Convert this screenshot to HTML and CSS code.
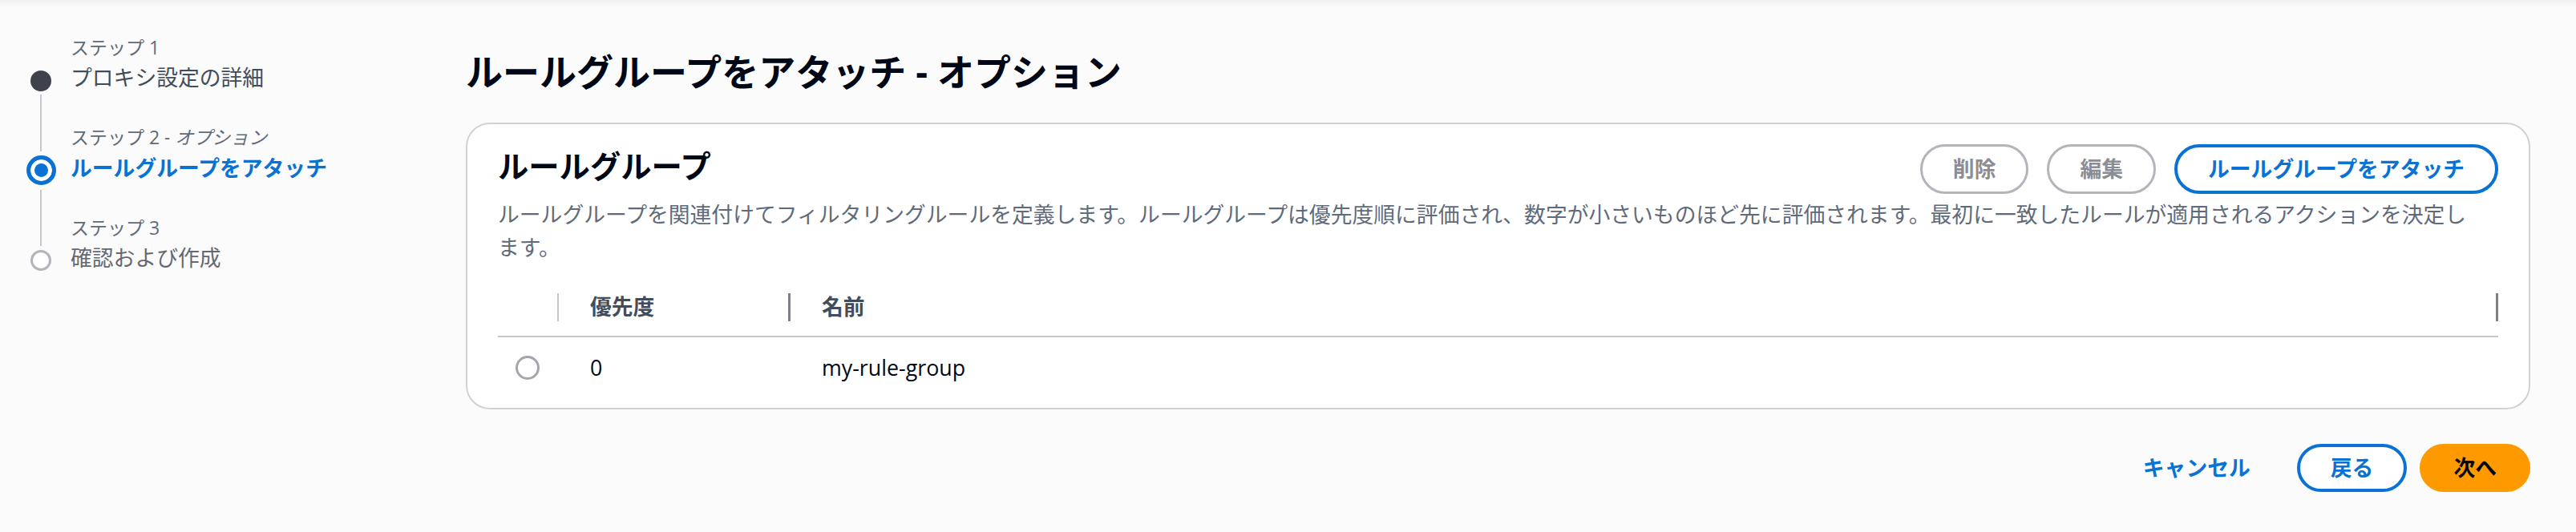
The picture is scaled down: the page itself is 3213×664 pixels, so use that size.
FILE: index.html
```html
<!DOCTYPE html>
<html lang="ja">
<head>
<meta charset="utf-8">
<title>ルールグループをアタッチ - オプション</title>
<link rel="stylesheet" href="styles.css">
</head>
<body>
<div class="layout">
  <nav class="wizard-nav">
    <ul class="steps">
      <li class="step visited">
        <div class="rail"><span class="seg-top"></span><span class="dot"></span><span class="seg-bottom"></span></div>
        <div class="step-text">
          <div class="step-num">ステップ 1</div>
          <div class="step-title">プロキシ設定の詳細</div>
        </div>
      </li>
      <li class="step current">
        <div class="rail"><span class="seg-top"></span><span class="dot"></span><span class="seg-bottom"></span></div>
        <div class="step-text">
          <div class="step-num">ステップ 2<i> - オプション</i></div>
          <div class="step-title">ルールグループをアタッチ</div>
        </div>
      </li>
      <li class="step upcoming">
        <div class="rail"><span class="seg-top"></span><span class="dot"></span></div>
        <div class="step-text">
          <div class="step-num">ステップ 3</div>
          <div class="step-title">確認および作成</div>
        </div>
      </li>
    </ul>
  </nav>

  <main class="main">
    <h1 class="page-title">ルールグループをアタッチ - オプション</h1>

    <section class="container">
      <div class="c-header">
        <h2 class="c-title">ルールグループ</h2>
        <div class="actions">
          <button class="btn btn-disabled" type="button">削除</button>
          <button class="btn btn-disabled" type="button">編集</button>
          <button class="btn btn-normal" type="button">ルールグループをアタッチ</button>
        </div>
      </div>
      <p class="desc">ルールグループを関連付けてフィルタリングルールを定義します。ルールグループは優先度順に評価され、数字が小さいものほど先に評価されます。最初に一致したルールが適用されるアクションを決定します。</p>

      <div class="table">
        <div class="t-head">
          <div class="th th-sel"></div><span class="divider light"></span>
          <div class="th th-pri">優先度</div><span class="divider"></span>
          <div class="th th-name">名前</div><span class="divider"></span>
        </div>
        <div class="tr">
          <div class="td td-sel"><span class="radio"></span></div>
          <div class="td td-pri">0</div>
          <div class="td td-name">my-rule-group</div>
        </div>
      </div>
    </section>

    <div class="footer">
      <button class="btn btn-link" type="button">キャンセル</button>
      <button class="btn btn-normal btn-foot" type="button">戻る</button>
      <button class="btn btn-primary btn-foot" type="button">次へ</button>
    </div>
  </main>
</div>
</body>
</html>
```
FILE: styles.css
```css
* { box-sizing: border-box; }

html, body { margin: 0; padding: 0; }

body {
  width: 3213px;
  height: 664px;
  overflow: hidden;
  background: #fbfbfb linear-gradient(#f1f1f2, #fbfbfb 10px) no-repeat;
  font-family: "Open Sans", "Noto Sans CJK JP", sans-serif;
  font-size: 26.8px;
  line-height: 40px;
  color: #000716;
}

.layout { display: flex; }

/* ---------- wizard navigation ---------- */
.wizard-nav {
  width: 581px;
  flex: none;
  padding-top: 44px;
  padding-left: 14px;
}

.steps { list-style: none; margin: 0; padding: 0; }

.step { display: flex; }

.rail {
  width: 74px;
  flex: none;
  display: flex;
  flex-direction: column;
  align-items: center;
}

.seg-top, .seg-bottom {
  width: 2px;
  background: #c6c6cd;
  flex: none;
}

.visited .seg-top { height: 39px; margin-bottom: 5px; background: transparent; }
.current .seg-top { height: 32.1px; margin-bottom: 5px; }
.upcoming .seg-top { height: 38.2px; margin-bottom: 5px; }

.seg-bottom { flex: 1; }
.visited .seg-bottom { margin-top: 4px; }
.current .seg-bottom { margin-top: 6.5px; }

.dot {
  flex: none;
  width: 26px;
  height: 26px;
  border-radius: 50%;
}
.visited .dot { background: #3f424d; }
.current .dot {
  width: 37px;
  height: 37px;
  border: 5px solid #0972d3;
  background: #0972d3;
  box-shadow: inset 0 0 0 5px #ffffff;
}
.upcoming .dot {
  border: 3px solid #b4b4bb;
  background: #ffffff;
}

.step-text { padding-bottom: 40px; }
.step:last-child .step-text { padding-bottom: 0; }

.step-num {
  font-size: 23px;
  line-height: 30.4px;
  color: #5f6b7a;
}

.step-title {
  margin-top: 4px;
  line-height: 38px;
  color: #414d5c;
}
.current .step-title { color: #0972d3; font-weight: 700; }
.upcoming .step-title { color: #656871; }

/* ---------- main ---------- */
.main {
  flex: 1;
  margin-right: 57px;
  padding-top: 60px;
}

.page-title {
  margin: 0;
  font-size: 46px;
  line-height: 58px;
  font-weight: 700;
  color: #000716;
}

.container {
  margin-top: 35px;
  background: #ffffff;
  border: 2px solid #d1d1d6;
  border-radius: 30px;
  padding: 25px 38px 11px;
}

.c-header {
  display: flex;
  justify-content: space-between;
  align-items: flex-start;
}

.c-title {
  margin: 0;
  padding-top: 5px;
  font-size: 38.3px;
  line-height: 45.6px;
  font-weight: 700;
  color: #000716;
}

.actions { display: flex; gap: 23px; }

.btn {
  display: inline-flex;
  align-items: center;
  justify-content: center;
  height: 62px;
  padding: 0 38px;
  border-radius: 31px;
  border: 3px solid #b4b4bb;
  background: #ffffff;
  font-family: inherit;
  font-size: 26.8px;
  line-height: 38px;
  font-weight: 700;
  cursor: pointer;
  white-space: nowrap;
}

.btn-disabled {
  color: #8c8c94;
  border-color: #b4b4bb;
}

.btn-normal {
  color: #0972d3;
  border: 4px solid #0972d3;
}

.btn-link {
  color: #0972d3;
  border: 4px solid transparent;
  background: transparent;
}

.btn-primary {
  color: #000716;
  background: #ff9900;
  border: 4px solid #ff9900;
}

.btn-foot { height: 60px; border-radius: 30px; }
.btn-link { height: 60px; }

.desc {
  margin: 6px 24px 0 0;
  color: #5f6b7a;
  line-height: 40.5px;
  text-spacing-trim: space-all;
}

/* ---------- table ---------- */
.table {
  margin-top: 17px;
  line-height: 38px;
}

.t-head {
  display: flex;
  align-items: center;
  padding: 18px 0 16.5px;
  border-bottom: 2px solid #c6c6cd;
}

.th {
  font-weight: 700;
  color: #414d5c;
}

.th-sel { width: 74px; flex: none; }
.th-pri { width: 286px; flex: none; padding-left: 39px; }
.th-name { flex: 1; padding-left: 39px; }

.divider {
  flex: none;
  width: 3px;
  height: 35px;
  background: #7d8089;
}
.divider.light {
  width: 2px;
  background: #c6c6cd;
}

.tr {
  display: flex;
  align-items: center;
  padding: 19.5px 0;
}

.td-sel {
  width: 76px;
  flex: none;
  padding-left: 22px;
  display: flex;
  align-items: center;
}
.td-pri { width: 289px; flex: none; padding-left: 39px; }
.td-name { flex: 1; padding-left: 39px; }

.radio {
  width: 30px;
  height: 30px;
  border: 3px solid #a4a4ad;
  border-radius: 50%;
  background: #ffffff;
}

/* ---------- footer ---------- */
.footer {
  margin-top: 43px;
  display: flex;
  justify-content: flex-end;
  gap: 16px;
}
```
